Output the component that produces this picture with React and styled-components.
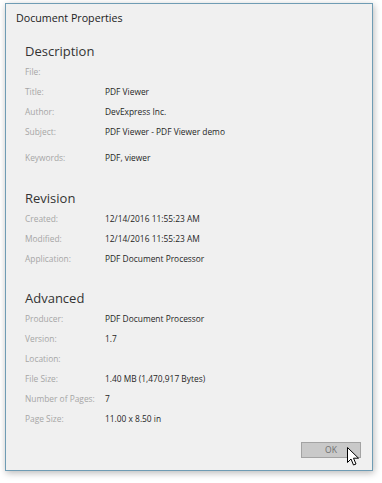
import React from 'react';
import styled, {createGlobalStyle} from 'styled-components';

const GlobalStyle = createGlobalStyle`
    html, body {
        margin: 0;
        padding: 0;
        background: #ffffff;
    }
    body {
        font-family: "Open Sans", "Noto Sans", sans-serif;
    }
`;

const StyledPage = styled.div`
    width: 382px;
    height: 483px;
    padding: 3px 0 0 5px;
    box-sizing: border-box;
`;

const StyledWindow = styled.section`
    position: relative;
    width: 368px;
    height: 468px;
    box-sizing: border-box;
    background: #f0f0f0;
    border: 1px solid #6f9cb4;
    box-shadow: 1px 2px 7px rgb(0 0 0 / 28%);
    display: flex;
    flex-direction: column;
`;

const StyledTitleBar = styled.header`
    height: 28px;
    line-height: 28px;
    padding-left: 10px;
    font-size: 10.7px;
    color: #222;
`;

const StyledBody = styled.div`
    flex: 1;
    padding-left: 19px;
    display: flex;
    flex-direction: column;
`;

const StyledHeading = styled.h2`
    margin: ${props => props.first ? '9px' : props.gap} 0 0 0;
    height: 21px;
    line-height: 21px;
    font-size: 13px;
    font-weight: normal;
    color: #333;
`;

const StyledRow = styled.div`
    display: grid;
    grid-template-columns: 80px 1fr;
    height: 20px;
    line-height: 20px;
    font-size: 8.4px;
    margin-top: ${props => props.gap || '0'};
`;

const StyledLabel = styled.span`
    color: #a6a6a6;
`;

const StyledValue = styled.span`
    color: #262626;
`;

const StyledFooter = styled.footer`
    display: flex;
    justify-content: flex-end;
    padding: 0 11px 12px 0;
`;

const StyledButton = styled.button`
    position: relative;
    width: 60px;
    height: 16px;
    padding: 0;
    background: #c9c9c9;
    border: 1px solid #a3a3a3;
    font-family: inherit;
    font-size: 8.5px;
    color: #6e6e6e;
    line-height: 14px;
`;

const StyledCursor = styled.svg`
    position: absolute;
    left: 45px;
    top: 4px;
`;

const sections = [
    {
        title: 'Description',
        rows: [
            ['File:', ''],
            ['Title:', 'PDF Viewer'],
            ['Author:', 'DevExpress Inc.'],
            ['Subject:', 'PDF Viewer - PDF Viewer demo'],
            ['Keywords:', 'PDF, viewer', '6px'],
        ],
    },
    {
        title: 'Revision',
        gap: '20px',
        rows: [
            ['Created:', '12/14/2016 11:55:23 AM'],
            ['Modified:', '12/14/2016 11:55:23 AM'],
            ['Application:', 'PDF Document Processor'],
        ],
    },
    {
        title: 'Advanced',
        gap: '19px',
        rows: [
            ['Producer:', 'PDF Document Processor'],
            ['Version:', '1.7'],
            ['Location:', ''],
            ['File Size:', '1.40 MB (1,470,917 Bytes)'],
            ['Number of Pages:', '7'],
            ['Page Size:', '11.00 x 8.50 in'],
        ],
    },
];

const Cursor = () => (
    <StyledCursor width="13" height="19" viewBox="0 0 13 19">
        <path d="M0.5 0.5 L0.5 15.5 L4 12 L6.5 18 L9 17 L6.5 11.2 L11.5 11.2 Z"
            fill="#ffffff" stroke="#000000" strokeWidth="1" strokeLinejoin="miter" />
    </StyledCursor>
);

export default function App() {
    return (
        <StyledPage>
            <GlobalStyle />
            <StyledWindow>
                <StyledTitleBar>Document Properties</StyledTitleBar>
                <StyledBody>
                    {sections.map((section, i) => (
                        <React.Fragment key={section.title}>
                            <StyledHeading first={i === 0} gap={section.gap}>{section.title}</StyledHeading>
                            {section.rows.map(([label, value, gap]) => (
                                <StyledRow key={label} gap={gap}>
                                    <StyledLabel>{label}</StyledLabel>
                                    <StyledValue>{value}</StyledValue>
                                </StyledRow>
                            ))}
                        </React.Fragment>
                    ))}
                </StyledBody>
                <StyledFooter>
                    <StyledButton>
                        OK
                        <Cursor />
                    </StyledButton>
                </StyledFooter>
            </StyledWindow>
        </StyledPage>
    );
}
